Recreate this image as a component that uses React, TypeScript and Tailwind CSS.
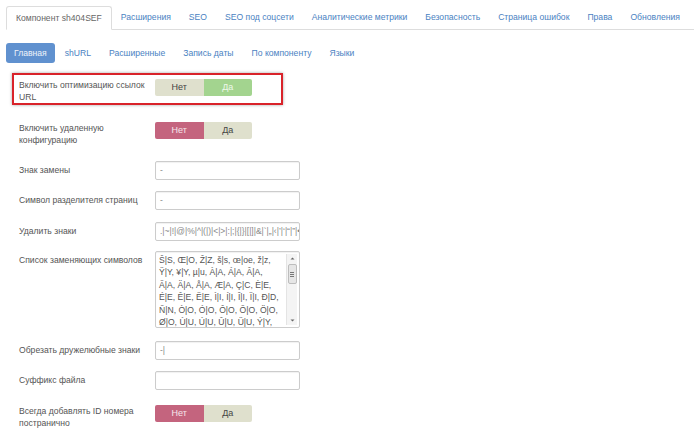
const tabs = [
  "Компонент sh404SEF",
  "Расширения",
  "SEO",
  "SEO под соцсети",
  "Аналитические метрики",
  "Безопасность",
  "Страница ошибок",
  "Права",
  "Обновления",
];

const pills = ["Главная", "shURL", "Расширенные", "Запись даты", "По компоненту", "Языки"];

const charLines = [
  "Š|S, Œ|O, Ž|Z, š|s, œ|oe, ž|z,",
  "Ÿ|Y, ¥|Y, µ|u, À|A, Á|A, Â|A,",
  "Ã|A, Ä|A, Å|A, Æ|A, Ç|C, È|E,",
  "É|E, Ê|E, Ë|E, Ì|I, Í|I, Î|I, Ï|I, Ð|D,",
  "Ñ|N, Ò|O, Ó|O, Ô|O, Õ|O, Ö|O,",
  "Ø|O, Ù|U, Ú|U, Û|U, Ü|U, Ý|Y,",
];

const Toggle = ({ yes }: { yes: boolean }) => (
  <div className="flex h-[17px] w-[97px] rounded-[2px] overflow-hidden text-[9px] leading-[17px]">
    <div className={`flex-1 text-center ${yes ? "bg-[#dfe0cd] text-[#444]" : "bg-[#c4647e] text-[#f6e6ea]"}`}>Нет</div>
    <div className={`flex-1 text-center ${yes ? "bg-[#a3d48f] text-[#eef8ea]" : "bg-[#dfe0cd] text-[#444]"}`}>Да</div>
  </div>
);

const Input = ({ value }: { value?: string }) => (
  <div className="h-[19px] w-[145px] border border-[#cccccc] rounded-[2px] bg-white px-[4px] text-[8.5px] leading-[17px] text-[#888] whitespace-nowrap overflow-hidden shadow-[inset_0_1px_1px_rgba(0,0,0,0.06)]">
    {value}
  </div>
);

const Label = ({ children, two }: { children: React.ReactNode; two?: boolean }) => (
  <div className={`w-[136px] text-[8.6px] text-[#555] ${two ? "leading-[12px]" : "leading-[19px]"}`}>{children}</div>
);

export default function App() {
  return (
    <div className="w-[700px] h-[441px] bg-white overflow-hidden font-['Liberation_Sans',Arial,sans-serif]">
      {/* top tabs */}
      <div className="mt-[6px] mx-[6px] flex h-[24px] border-b border-[#dddddd] text-[8.6px]">
        {tabs.map((t, i) => (
          <div
            key={t}
            className={
              i === 0
                ? "h-[24px] px-[9px] leading-[23px] text-[#666] bg-white border border-[#dddddd] border-b-white rounded-t-[3px]"
                : "h-[23px] px-[9px] leading-[23px] text-[#4a82c2]"
            }
          >
            {t}
          </div>
        ))}
      </div>

      {/* sub pills */}
      <div className="mt-[13px] mx-[6px] flex gap-[2px] text-[8.6px]">
        {pills.map((p, i) => (
          <div
            key={p}
            className={
              i === 0
                ? "h-[20px] px-[8px] leading-[20px] rounded-[3px] bg-[#6091cf] text-[#eef3fa]"
                : "h-[20px] px-[8px] leading-[20px] text-[#4a82c2]"
            }
          >
            {p}
          </div>
        ))}
      </div>

      <div className="ml-[12px] mt-[10px]">
        {/* highlighted row */}
        <div className="w-[271px] border-2 border-[#d9232a] pl-[5px] pt-[4px] shadow-[0_0_3px_rgba(0,0,0,0.35)] flex items-start">
          <Label two>
            Включить оптимизацию ссылок
            <br />
            URL
          </Label>
          <Toggle yes />
        </div>

        <div className="pl-[7px]">
          <div className="mt-[17px] flex items-start">
            <Label two>
              Включить удаленную
              <br />
              конфигурацию
            </Label>
            <Toggle yes={false} />
          </div>

          <div className="mt-[15px] flex items-start">
            <Label>Знак замены</Label>
            <Input value="-" />
          </div>

          <div className="mt-[11px] flex items-start">
            <Label>Символ разделителя страниц</Label>
            <Input value="-" />
          </div>

          <div className="mt-[12px] flex items-start">
            <Label>Удалить знаки</Label>
            <Input value=".|~|!|@|%|^|(|)|<|>|:|;|{|}|[|]|&|`|„|‹|’|‘|“|”|•" />
          </div>

          <div className="mt-[10px] flex items-start">
            <Label>Список заменяющих символов</Label>
            <div className="h-[77px] w-[145px] border border-[#cccccc] rounded-[2px] bg-white flex overflow-hidden shadow-[inset_0_1px_1px_rgba(0,0,0,0.06)]">
              <div className="flex-1 pl-[3px] pt-[2px] text-[8.6px] leading-[12.4px] text-[#555] whitespace-nowrap overflow-hidden">
                {charLines.map((l) => (
                  <div key={l}>{l}</div>
                ))}
              </div>
              <div className="w-[11px] mr-[2px] my-[2px] flex flex-col items-center bg-[#f4f4f4] border-l border-[#e4e4e4]">
                <svg width="9" height="9" viewBox="0 0 9 9">
                  <path d="M2.5 5.5 L4.5 3.5 L6.5 5.5 Z" fill="#666" />
                </svg>
                <div className="mt-[1px] w-[9px] h-[20px] rounded-[2px] bg-[#e6e6e6] border border-[#bdbdbd] flex flex-col items-center justify-center gap-[1px]">
                  <div className="w-[4px] h-px bg-[#777]" />
                  <div className="w-[4px] h-px bg-[#777]" />
                  <div className="w-[4px] h-px bg-[#777]" />
                </div>
                <div className="flex-1" />
                <svg width="9" height="9" viewBox="0 0 9 9">
                  <path d="M2.5 3.5 L4.5 5.5 L6.5 3.5 Z" fill="#666" />
                </svg>
              </div>
            </div>
          </div>

          <div className="mt-[13px] flex items-start">
            <Label>Обрезать дружелюбные знаки</Label>
            <Input value="-|" />
          </div>

          <div className="mt-[11px] flex items-start">
            <Label>Суффикс файла</Label>
            <Input />
          </div>

          <div className="mt-[15px] flex items-start">
            <Label two>
              Всегда добавлять ID номера
              <br />
              постранично
            </Label>
            <Toggle yes={false} />
          </div>
        </div>
      </div>
    </div>
  );
}
